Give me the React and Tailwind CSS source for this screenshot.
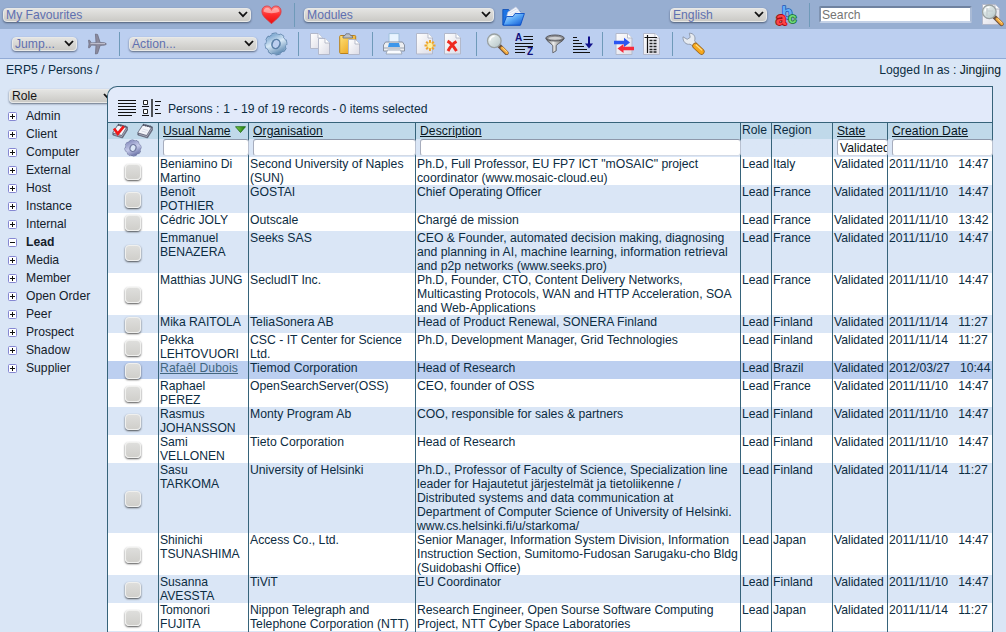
import React from "react";

function Svg({ w, h, className = "", children }) {
  return (
    <svg width={w} height={h} viewBox={`0 0 ${w} ${h}`} className={`block shrink-0 ${className}`} fill="none">
      {children}
    </svg>
  );
}

function Select({ label, className = "", dark = false }) {
  return (
    <div
      className={`flex h-[14px] shrink-0 items-center justify-between rounded-[4px] border border-[#e9e9e7] bg-gradient-to-b from-[#e4e4e2] to-[#cbcac6] pl-[2px] pr-[2px] text-[12.16px] leading-[14px] shadow-[0_1px_2px_rgba(40,50,70,0.65)] ${dark ? "text-[#151515]" : "text-[#6070b0]"} ${className}`}
    >
      <span>{label}</span>
      <Svg w={10} h={7}>
        <path d="M1 1 L5 5.2 L9 1" stroke="#111" strokeWidth="1.8" />
      </Svg>
    </div>
  );
}

function Divider({ className = "" }) {
  return <div className={`h-6 w-px shrink-0 bg-[#6f9ab9] ${className}`} />;
}

function Sheet({ x = 0, y = 0, w = 14, h = 19 }) {
  return (
    <g transform={`translate(${x} ${y})`}>
      <path d={`M.5 .5H${w - 5}L${w - 0.5} 5V${h - 0.5}H.5Z`} fill="url(#paper)" stroke="#b3b9cb" />
      <path d={`M${w - 5} .5V5H${w - 0.5}`} fill="#fff" stroke="#a9afbf" strokeWidth=".8" />
    </g>
  );
}

function Lens({ x = 0, y = 0 }) {
  return (
    <g transform={`translate(${x} ${y})`}>
      <path d="M13 13L20 20" stroke="#6d5340" strokeWidth="4.4" strokeLinecap="round" />
      <path d="M15.5 15L20.3 19.7" stroke="#f3a93a" strokeWidth="3" strokeLinecap="round" />
      <path d="M16 14.8L20.4 19" stroke="#ffe0a0" strokeWidth="1" />
      <circle cx="7.8" cy="7.8" r="6.8" fill="url(#glass)" stroke="#9aa1a2" strokeWidth="1.3" />
      <path d="M3.5 7.5A4.5 4.5 0 0 1 8 3.2" stroke="#fff" strokeWidth="1.4" />
    </g>
  );
}

function Defs() {
  return (
    <svg width="0" height="0" className="absolute">
      <defs>
        <linearGradient id="paper" x1="0" y1="0" x2="1" y2="1">
          <stop offset="0" stopColor="#ffffff" />
          <stop offset="1" stopColor="#dcdce6" />
        </linearGradient>
        <linearGradient id="glass" x1="0" y1="0" x2="1" y2="1">
          <stop offset="0" stopColor="#f4faf8" />
          <stop offset="1" stopColor="#b4c4c6" />
        </linearGradient>
        <linearGradient id="heart" x1="0" y1="0" x2="0" y2="1">
          <stop offset="0" stopColor="#ff7d7a" />
          <stop offset=".5" stopColor="#ff2c2c" />
          <stop offset="1" stopColor="#e80f10" />
        </linearGradient>
        <linearGradient id="folder" x1="0" y1="0" x2="1" y2="1">
          <stop offset="0" stopColor="#cfeeff" />
          <stop offset=".5" stopColor="#55a5f6" />
          <stop offset="1" stopColor="#0a50cf" />
        </linearGradient>
        <linearGradient id="steel" x1="0" y1="0" x2="1" y2="1">
          <stop offset="0" stopColor="#7ba6cf" />
          <stop offset=".45" stopColor="#d8e9f7" />
          <stop offset="1" stopColor="#5f8ab2" />
        </linearGradient>
        <linearGradient id="violet" x1="0" y1="0" x2="1" y2="1">
          <stop offset="0" stopColor="#8a90c0" />
          <stop offset=".5" stopColor="#c6cbea" />
          <stop offset="1" stopColor="#6a72a6" />
        </linearGradient>
        <linearGradient id="metal" x1="0" y1="0" x2="1" y2="0">
          <stop offset="0" stopColor="#555" />
          <stop offset=".4" stopColor="#eee" />
          <stop offset="1" stopColor="#555" />
        </linearGradient>
        <linearGradient id="gold" x1="0" y1="0" x2="1" y2="1">
          <stop offset="0" stopColor="#ffe278" />
          <stop offset="1" stopColor="#e89a10" />
        </linearGradient>
        <linearGradient id="leaf" x1="0" y1="0" x2="1" y2="0">
          <stop offset="0" stopColor="#86cf4a" />
          <stop offset="1" stopColor="#1c7a10" />
        </linearGradient>
      </defs>
    </svg>
  );
}

const HeartIcon = () => (
  <Svg w={21} h={20} className="ml-[10px]">
    <path d="M10.5 18.8C7.5 15.2 .9 12 .9 6.2C.9 3 3.2 1 5.9 1C8 1 9.6 2 10.5 3.6C11.4 2 13 1 15.1 1C17.8 1 20.1 3 20.1 6.2C20.1 12 13.5 15.2 10.5 18.8Z" fill="url(#heart)" stroke="#d43a44" strokeWidth=".8" />
    <path d="M2.5 6.5C2.7 3.5 5 2.2 7 2.8C8.7 3.2 9.6 4.4 10.5 6C11.3 4.4 12.3 3.2 14 2.8C16.2 2.3 18.3 3.5 18.5 6.5C14 8.8 7 8.8 2.5 6.5Z" fill="#fff" opacity=".45" />
  </Svg>
);

const FolderIcon = () => (
  <Svg w={23} h={20} className="ml-[8px] mt-[2px]">
    <path d="M.8 19V3.5H6.5L8 5H18V19Z" fill="#1e74e4" stroke="#0b4bb4" strokeWidth=".8" />
    <path d="M4.5 11L6 6L14 .8L19.5 7.5L18 11Z" fill="#f2f5fb" stroke="#b7c3dc" strokeWidth=".7" />
    <path d="M7.5 7L14.5 3M8 9L16.5 5" stroke="#cbd4e8" strokeWidth=".7" />
    <path d="M1.2 19.2L4.5 10.5H11L13 7.5H22.4L18.5 19.2Z" fill="url(#folder)" stroke="#0b4fc4" strokeWidth=".9" />
  </Svg>
);

const AbcIcon = () => (
  <Svg w={24} h={24} className="ml-[8px] overflow-visible">
    <g fontFamily="Liberation Sans" fontWeight="700" paintOrder="stroke" strokeLinejoin="round">
      <text x="6.4" y="15.6" fontSize="18" fill="#62aef6" stroke="#1c55b4" strokeWidth="1.4">b</text>
      <text x=".8" y="22" fontSize="19" fill="#ff4444" stroke="#a80c14" strokeWidth="1.8">a</text>
      <text x="13.2" y="20.4" fontSize="15" fill="#6fd87a" stroke="#14702a" strokeWidth="1.6">c</text>
    </g>
  </Svg>
);

const SearchPageIcon = () => (
  <Svg w={23} h={24} className="ml-[9px]">
    <Sheet x={1} y={1} w={18} h={21} />
    <Lens x={0.5} y={1} />
    <path d="M6 5V13M6 8H12" stroke="#c4cccf" strokeWidth="1.2" />
  </Svg>
);

const PlaneIcon = () => (
  <Svg w={19} h={22} className="ml-[11px]">
    <path d="M18.5 11C18 9.9 16 9.6 12.2 9.6L9.6 1.5L7.4 1L8 9.7L3.4 9.9L1.6 7.2H.5L1 11L.5 14.8H1.6L3.4 12.1L8 12.3L7.4 21L9.6 20.5L12.2 12.4C16 12.4 18 12.1 18.5 11Z" fill="#8b8a9d" stroke="#6a6a7d" strokeWidth=".7" />
    <path d="M2.5 10.6H17" stroke="#c9c9d8" strokeWidth=".9" />
  </Svg>
);

function Gear({ size, fill, edge, className = "" }) {
  return (
    <svg width={size} height={size} viewBox="0 0 24 24" fill="none" className={`block shrink-0 ${className}`}>
      <g transform="rotate(20 12 12)">
        <circle cx="12" cy="12" r="9.4" stroke={edge} strokeWidth="4" strokeDasharray="4.3 3.08" />
        <circle cx="12" cy="12" r="7.4" stroke={edge} strokeWidth="6.2" />
        <circle cx="12" cy="12" r="9.3" stroke={fill} strokeWidth="2.8" strokeDasharray="3.6 3.7" strokeDashoffset="-.3" />
        <circle cx="12" cy="12" r="7.3" stroke={fill} strokeWidth="5.2" />
        <ellipse cx="12" cy="12" rx="3.8" ry="4.7" stroke={edge} strokeWidth="1.4" />
      </g>
    </svg>
  );
}

const CopyIcon = () => (
  <Svg w={21} h={22} className="ml-[11px]">
    <Sheet x={0} y={0} w={13} h={16} />
    <Sheet x={8} y={5} w={12} h={17} />
  </Svg>
);

const PasteIcon = () => (
  <Svg w={22} h={22} className="ml-[8px]">
    <rect x=".7" y="2.5" width="16" height="18" rx="1" fill="url(#gold)" stroke="#b8801c" />
    <path d="M4 5V3.2L6 2.4L7 .8H10.5L11.5 2.4L13.5 3.2V5Z" fill="#bcc0c6" stroke="#686c74" strokeWidth=".8" />
    <Sheet x={9} y={6} w={12} h={16} />
  </Svg>
);

const PrintIcon = () => (
  <Svg w={22} h={22} className="ml-[10px]">
    <path d="M6 10V.6H16V10" fill="#e8f4ff" stroke="#a0c0dc" />
    <path d="M2.5 9H19.5L21.5 12V18H.5V12Z" fill="#eceef1" stroke="#80899a" strokeWidth=".9" />
    <path d="M6 10H16L17 14H5Z" fill="#3d97ea" />
    <path d="M1 15H21" stroke="#9da5b1" />
    <path d="M4.5 17H17.5L19 21H3Z" fill="#fafcff" stroke="#9da7b5" strokeWidth=".9" />
  </Svg>
);

const NewIcon = () => (
  <Svg w={20} h={22} className="ml-[11px]">
    <Sheet x={0} y={0} w={17} h={21.5} />
    <g stroke="#eea62b" strokeWidth="2">
      <path d="M14 7V18M8.5 12.5H19.5M10.2 8.7L17.8 16.3M17.8 8.7L10.2 16.3" />
    </g>
    <circle cx="14" cy="12.5" r="2.7" fill="#fff2a2" />
  </Svg>
);

const DeleteIcon = () => (
  <Svg w={17} h={22} className="ml-[8px]">
    <Sheet x={0} y={0} w={17} h={21.5} />
    <path d="M3.5 8.2C7 10 10 14 12.5 18M12.5 8.5C9 10.5 6 14 4 18" stroke="#ee2a20" strokeWidth="3" />
  </Svg>
);

const LensIcon = () => (
  <Svg w={23} h={22} className="ml-[9px]">
    <Lens x={0.5} y={0} />
  </Svg>
);

const AzIcon = () => (
  <Svg w={20} h={22} className="ml-[6px]">
    <path d="M8.5 3.5H18M8.5 6.5H18M0 10.5H18M0 13.5H18M0 16.5H10M0 19.5H10" stroke="#111" strokeWidth="1.2" />
    <g fontFamily="Liberation Sans" fontWeight="700" fontSize="10" fill="#10107c">
      <text x="0" y="8">A</text>
      <text x="12" y="21.5">Z</text>
    </g>
  </Svg>
);

const FunnelIcon = () => (
  <Svg w={20} h={20} className="ml-[10px]">
    <path d="M.8 4.5C2 7.5 5.5 9 7.8 11.5V18.8L11.2 16.8V11.5C13.5 9 18 7.5 19.2 4.5Z" fill="url(#metal)" stroke="#4c4c50" strokeWidth=".8" />
    <ellipse cx="10" cy="4" rx="9.1" ry="3" fill="#8c8c90" stroke="#5a5a5f" />
    <ellipse cx="10" cy="4.3" rx="6.8" ry="1.5" fill="#cfd0d2" />
  </Svg>
);

const SortIcon = () => (
  <Svg w={20} h={18} className="ml-[8px] mt-[2px]">
    <path d="M0 1.5H4M0 4.5H6M0 7.5H9M0 10.5H11M0 13.5H14M0 16.5H17" stroke="#111" strokeWidth="1.2" />
    <path d="M16 .5V10" stroke="#10108a" strokeWidth="2" />
    <path d="M12 7.5H20L16 12.5Z" fill="#10108a" />
  </Svg>
);

const SwapIcon = () => (
  <Svg w={20} h={22} className="ml-[11px]">
    <Sheet x={1.5} y={0} w={17} h={22} />
    <path d="M0 7.8H10V4.8L16 9.5L10 14V11.2H0Z" fill="#2b55f2" />
    <path d="M20 13.8H9.5V11L3.5 15.5L9.5 20V17.2H20Z" fill="#f52b3c" />
  </Svg>
);

const ReportIcon = () => (
  <Svg w={17} h={22} className="ml-[9px]">
    <Sheet x={0} y={0} w={17} h={22} />
    <path d="M1.5 4.5H14M4.5 2V20" stroke="#111" strokeWidth="1.2" />
    <path d="M6.5 7.5H13.5M6.5 10.5H13.5M6.5 13.5H13.5M6.5 16.5H13.5M6.5 19H13.5" stroke="#222" strokeDasharray="3 1" strokeWidth="1.3" />
  </Svg>
);

const WrenchIcon = () => (
  <Svg w={23} h={23} className="ml-[9px]">
    <path d="M10.5 10.5L14 14" stroke="#8f99a8" strokeWidth="5" />
    <path d="M1 4.8L5.2 7.3L8.2 5.4L7.3 1.2C11.8 1 14 5 12.6 8.6L14.5 11.5L11.2 14.2L8 12.2C4 13 .6 9.6 1 4.8Z" fill="#e7ebf1" stroke="#8b95a6" strokeWidth=".9" />
    <path d="M13.5 14L19.4 19.5" stroke="#9b6720" strokeWidth="6.4" strokeLinecap="round" />
    <path d="M13.5 14L19.4 19.5" stroke="#f7a81c" strokeWidth="4.8" strokeLinecap="round" />
    <path d="M13.8 12.7L20 18.4" stroke="#ffe08e" strokeWidth="1.2" />
  </Svg>
);

function Notebook({ checked = false, className = "" }) {
  return (
    <Svg w={16} h={16} className={className}>
      <path d="M6 1.5L15.5 4V7L10.5 15L.8 12V9.5Z" fill="#6d7083" stroke="#565a6c" strokeWidth=".6" />
      <path d="M6 2.5L14 4.6L9.5 12L1.2 9.5Z" fill="#f4f5fa" />
      <path d="M10 13.2L14.8 5.6M2 11.2L10 13.6" stroke="#b9bccb" strokeWidth=".7" />
      <path d="M6 1.6L15 4" stroke="#4b4f60" strokeWidth="2" strokeDasharray="1.4 .8" />
      {checked ? (
        <path d="M2 5.5L5.8 10.7L11.8 3.3" stroke="#f01818" strokeWidth="2.7" />
      ) : (
        <path d="M5.5 6L11 7.5M4.5 8L9.5 9.4" stroke="#d3d7e4" strokeWidth=".8" />
      )}
    </Svg>
  );
}

const categories = [
  "Admin", "Client", "Computer", "External", "Host", "Instance", "Internal", "Lead",
  "Media", "Member", "Open Order", "Peer", "Prospect", "Shadow", "Supplier",
];

const N = "2011/11/10\u00a0\u00a0 14:47";
const L = "2011/11/14\u00a0\u00a0 11:27";

const people = [
  ["Beniamino Di\nMartino", "Second University of Naples\n(SUN)", "Ph.D, Full Professor, EU FP7 ICT \"mOSAIC\" project\ncoordinator (www.mosaic-cloud.eu)", "Italy", N],
  ["Benoît\nPOTHIER", "GOSTAI", "Chief Operating Officer", "France", N],
  ["Cédric JOLY", "Outscale", "Chargé de mission", "France", "2011/11/10\u00a0\u00a0 13:42"],
  ["Emmanuel\nBENAZERA", "Seeks SAS", "CEO & Founder, automated decision making, diagnosing\nand planning in AI, machine learning, information retrieval\nand p2p networks (www.seeks.pro)", "France", N],
  ["Matthias JUNG", "SecludIT Inc.", "Ph.D, Founder, CTO, Content Delivery Networks,\nMulticasting Protocols, WAN and HTTP Acceleration, SOA\nand Web-Applications", "France", N],
  ["Mika RAITOLA", "TeliaSonera AB", "Head of Product Renewal, SONERA Finland", "Finland", L],
  ["Pekka\nLEHTOVUORI", "CSC - IT Center for Science\nLtd.", "Ph.D, Development Manager, Grid Technologies", "Finland", L],
  ["Rafaêl Dubois", "Tiemod Corporation", "Head of Research", "Brazil", "2012/03/27\u00a0\u00a0 10:44"],
  ["Raphael\nPEREZ", "OpenSearchServer(OSS)", "CEO, founder of OSS", "France", N],
  ["Rasmus\nJOHANSSON", "Monty Program Ab", "COO, responsible for sales & partners", "Finland", N],
  ["Sami\nVELLONEN", "Tieto Corporation", "Head of Research", "Finland", N],
  ["Sasu\nTARKOMA", "University of Helsinki", "Ph.D., Professor of Faculty of Science, Specialization line\nleader for Hajautetut järjestelmät ja tietoliikenne /\nDistributed systems and data communication at\nDepartment of Computer Science of University of Helsinki.\nwww.cs.helsinki.fi/u/starkoma/", "Finland", L],
  ["Shinichi\nTSUNASHIMA", "Access Co., Ltd.", "Senior Manager, Information System Division, Information\nInstruction Section, Sumitomo-Fudosan Sarugaku-cho Bldg\n(Suidobashi Office)", "Japan", N],
  ["Susanna\nAVESSTA", "TiViT", "EU Coordinator", "Finland", N],
  ["Tomonori\nFUJITA", "Nippon Telegraph and\nTelephone Corporation (NTT)", "Research Engineer, Open Sourse Software Computing\nProject, NTT Cyber Space Laboratories", "Japan", L],
];

const gridCols = "grid grid-cols-[51px_90px_167px_325px_31px_61px_55px_105px]";

function Cell({ children, pad = "pl-px", className = "" }) {
  return <div className={`min-w-0 whitespace-pre border-r border-[#36637a] ${pad} ${className}`}>{children}</div>;
}

function PersonRow({ person, index }) {
  const [name, org, description, region, date] = person;
  const active = index === 7;
  const bg = active ? "bg-[#bccff0]" : index % 2 ? "bg-[#dae6f6]" : "bg-white";
  return (
    <div className={`${gridCols} min-h-[18px] leading-[14px] ${bg}`}>
      <Cell pad="" className="flex items-center justify-center pt-[2px]">
        <div className="h-4 w-4 rounded-[4px] border border-[#f0f0ee] bg-gradient-to-b from-[#dededc] to-[#d0cfcb] shadow-[0_1px_2px_rgba(30,30,30,0.75)]" />
      </Cell>
      <Cell>{active ? <span className="tracking-[0.13px] text-[#42667f] underline">{name}</span> : name}</Cell>
      <Cell className="text-[12.22px]">{org}</Cell>
      <Cell className="text-[12.21px]">{description}</Cell>
      <Cell>Lead</Cell>
      <Cell>{region}</Cell>
      <Cell>Validated</Cell>
      <Cell>{date}</Cell>
    </div>
  );
}

function FilterCell({ value, filter = true }) {
  return (
    <Cell pad="pl-[4px]">
      {filter && (
        <div className="relative -mr-px h-[17px] overflow-hidden rounded-[3px] border border-b-[#d3dae6] border-l-[#a7adbd] border-r-[#b9c1d0] border-t-[#8e98ab] bg-white pl-[2px] leading-[16px] text-[#0d1418]">
          {value}
        </div>
      )}
    </Cell>
  );
}

export default function App() {
  return (
    <div className="h-[632px] w-[1006px] overflow-hidden bg-[#dae6f6] font-['Liberation_Sans',Arial,sans-serif] text-[12.16px] leading-[14px] text-[#0c2c42]">
      <Defs />
      <div className="flex h-[29px] items-center bg-[#97aed1] pl-[3px]">
        <Select label="My Favourites" className="w-[248px]" />
        <HeartIcon />
        <Divider className="ml-[12px]" />
        <Select label="Modules" className="ml-[9px] w-[190px]" />
        <FolderIcon />
        <Select label="English" className="ml-[145px] w-[97px]" />
        <AbcIcon />
        <Divider className="ml-[10px]" />
        <div className="ml-[9px] h-[17px] w-[153px] shrink-0 rounded-[2px] border-2 border-b-[#c4d1e6] border-l-[#7f93b1] border-r-[#a9bad5] border-t-[#6f82a0] bg-white pl-px text-[12.16px] leading-[14px] text-[#757575]">
          Search
        </div>
        <SearchPageIcon />
      </div>
      <div className="flex h-[30px] items-center border-b border-[#92abd6] bg-[#bccff0] pl-[12px]">
        <Select label="Jump..." className="w-[65px]" />
        <PlaneIcon />
        <Divider className="ml-[12px]" />
        <Select label="Action..." className="ml-[9px] w-[128px]" />
        <Gear size={24} fill="url(#steel)" edge="#5b80a8" className="ml-[7px]" />
        <Divider className="ml-[10px]" />
        <CopyIcon />
        <PasteIcon />
        <Divider className="ml-[11px]" />
        <PrintIcon />
        <NewIcon />
        <DeleteIcon />
        <Divider className="ml-[15px]" />
        <LensIcon />
        <AzIcon />
        <FunnelIcon />
        <SortIcon />
        <Divider className="ml-[9px]" />
        <SwapIcon />
        <ReportIcon />
        <Divider className="ml-[12px]" />
        <WrenchIcon />
      </div>
      <div className="flex h-[27px] justify-between pl-[6px] pr-[5px] pt-[4px]">
        <span>ERP5 / Persons /</span>
        <span>Logged In as : <span className="text-[#071a28]">Jingjing</span></span>
      </div>
      <div className="flex h-[546px]">
        <div className="w-[107px] shrink-0 pl-[8px] pt-[3px] text-[#14202a]">
          <Select label="Role" className="ml-px w-[107px]" dark />
          <div className="pt-[4px]">
            {categories.map((name) => (
              <div key={name} className={`flex h-[18px] items-center gap-[9px] ${name === "Lead" ? "font-bold" : ""}`}>
                <Svg w={9} h={9} className="mt-px">
                  <rect x=".5" y=".5" width="8" height="8" rx="1" fill="#fff" stroke="#8587d2" />
                  <path d={name === "Lead" ? "M2 4.5H7" : "M2 4.5H7M4.5 2V7"} stroke="#111" />
                </Svg>
                <span>{name}</span>
              </div>
            ))}
          </div>
        </div>
        <div className="relative w-[886px] shrink-0">
          <div className="flex h-[36px] items-center rounded-tl-[10px] border-l border-r border-t border-[#36637a] bg-[#e2eafa] pl-[10px] pt-[9px]">
            <Svg w={18} h={16} className="-mt-[2px]">
              <path d="M0 .5H18M0 3.5H18M0 6.5H18M0 9.5H18M0 12.5H18M0 15.5H14" stroke="#111" strokeWidth="1.2" />
            </Svg>
            <Svg w={20} h={18} className="-mt-[2px] ml-[6px]">
              <path d="M1.5 1.5H5.5V5.5H1.5ZM1.5 10.5H5.5V14.5H1.5Z" fill="#fff" stroke="#222" />
              <path d="M0 7.5H7M0 16.5H7M13 2.5H19M13 6.5H18M13 10.5H16M13 14.5H19" stroke="#111" strokeWidth="1.2" />
              <path d="M10 0V18" stroke="#111" strokeWidth="1.4" />
            </Svg>
            <span className="ml-[6px]">Persons :</span>
            <span className="ml-[4px]">1 - 19 of 19 records - 0 items selected</span>
          </div>
          <div className="border-l border-t border-[#36637a]">
            <div className="flex bg-gradient-to-b from-[#c0d9ea] from-[16px] to-[#dae6f6] to-[16px]">
              <div className="flex h-[34px] w-[51px] shrink-0 flex-wrap content-start border-r border-[#36637a]">
                <Notebook checked className="ml-[4px]" />
                <Notebook className="ml-[9px]" />
                <Gear size={18} fill="url(#violet)" edge="#70789f" className="ml-[16px]" />
              </div>
              <div className="grow">
                <div className="grid h-[16px] grid-cols-[90px_167px_325px_31px_61px_55px_105px] text-[#08161f]">
                  <Cell pad="pl-[4px] pr-[2px]" className="flex items-start justify-between pt-px">
                    <span className="tracking-[0.08px] underline">Usual Name</span>
                    <Svg w={11} h={7} className="mt-[2px]">
                      <path d="M.5 .7H10.5L5.5 6.5Z" fill="url(#leaf)" stroke="#1b6a12" strokeWidth=".8" />
                    </Svg>
                  </Cell>
                  <Cell pad="pl-[4px]" className="pt-px tracking-[0.08px] underline">Organisation</Cell>
                  <Cell pad="pl-[4px]" className="pt-px tracking-[0.08px] underline">Description</Cell>
                  <Cell className="text-[#0c2c42]">Role</Cell>
                  <Cell className="text-[#0c2c42]">Region</Cell>
                  <Cell pad="pl-[4px]" className="pt-px underline">State</Cell>
                  <Cell pad="pl-[4px]" className="pt-px tracking-[0.08px] underline">Creation Date</Cell>
                </div>
                <div className="grid h-[18px] grid-cols-[90px_167px_325px_31px_61px_55px_105px]">
                  <FilterCell />
                  <FilterCell />
                  <FilterCell />
                  <FilterCell filter={false} />
                  <FilterCell filter={false} />
                  <FilterCell value="Validated" />
                  <FilterCell />
                </div>
              </div>
            </div>
            {people.map((person, index) => (
              <PersonRow key={person[0]} person={person} index={index} />
            ))}
            <div className={`${gridCols} h-[18px] bg-[#dae6f6]`}>
              {[0, 1, 2, 3, 4, 5, 6, 7].map((n) => (
                <Cell key={n} />
              ))}
            </div>
          </div>
        </div>
      </div>
    </div>
  );
}
